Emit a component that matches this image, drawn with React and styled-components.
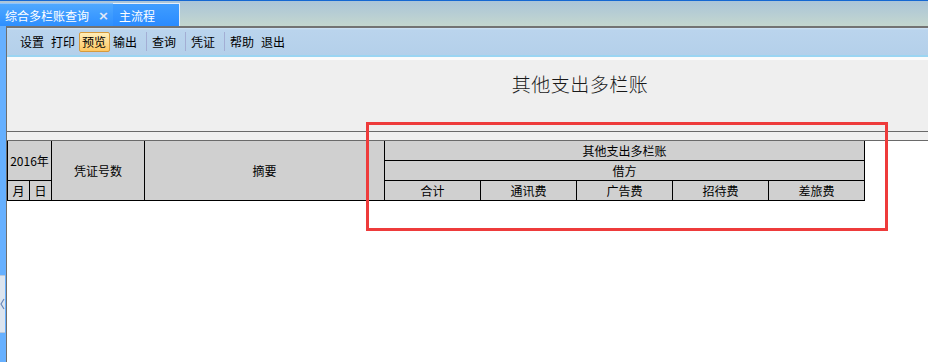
import React from 'react';
import styled, { createGlobalStyle, css } from 'styled-components';

const GlobalStyle = createGlobalStyle`
  html, body {
    margin: 0;
    padding: 0;
    background: #fff;
  }
  body {
    font-family: "Noto Sans CJK SC", "Noto Sans", sans-serif;
    font-size: 12px;
    color: #000;
  }
`;

const Page = styled.div`
  position: relative;
  width: 928px;
  height: 362px;
  display: flex;
  flex-direction: column;
  overflow: hidden;
`;

const TabBar = styled.div`
  height: 26px;
  box-sizing: border-box;
  border-top: 1px solid #1467d2;
  background: linear-gradient(#aac4d8, #c4d7cf);
  display: flex;
  align-items: flex-end;
  flex-shrink: 0;
`;

const Tab = styled.div`
  width: ${p => p.$w}px;
  height: 23px;
  box-sizing: border-box;
  display: flex;
  align-items: center;
  padding-left: ${p => p.$pl}px;
  color: #fff;
  font-size: 12px;
  white-space: nowrap;
  ${p => p.$active
    ? css`
      background: linear-gradient(#4ea8ff, #2e8fff);
      border-top: 1px solid #8cc4ff;
    `
    : css`
      background: linear-gradient(#3f9dff, #2b8bff);
      border-top: 1px solid #e4eefa;
      border-right: 1px solid #e4eefa;
    `}
`;

const Close = styled.span`
  margin-left: 9px;
  font-family: "DejaVu Sans", sans-serif;
  font-size: 13px;
  font-weight: bold;
  color: #e2e8f6;
  line-height: 1;
`;

const Body = styled.div`
  flex: 1;
  display: flex;
  min-height: 0;
`;

const LeftStrip = styled.div`
  width: 6px;
  flex-shrink: 0;
  background: #66b0ff;
  border-right: 1px solid #6e6e6e;
  display: flex;
  flex-direction: column;
`;

const Handle = styled.div`
  margin-top: 249px;
  width: 5px;
  height: 58px;
  box-sizing: border-box;
  background: #dde5ef;
  border-top: 1px solid #b9c8dc;
  border-bottom: 1px solid #b9c8dc;
  display: flex;
  align-items: center;
`;

const Main = styled.div`
  flex: 1;
  display: flex;
  flex-direction: column;
  min-width: 0;
`;

const Toolbar = styled.div`
  height: 27px;
  border-top: 2px solid #737373;
  border-bottom: 2px solid #9bd5f2;
  background: linear-gradient(#d0e3f5 0, #bad4ed 2px, #b4d0ea 100%);
  display: flex;
  align-items: center;
  padding-left: 9.5px;
`;

const ToolBtn = styled.div`
  height: 20px;
  line-height: 18px;
  box-sizing: border-box;
  padding: 0 2.5px;
  border: 1px solid transparent;
  font-size: 12px;
  white-space: nowrap;
  ${p => p.$active && css`
    background: linear-gradient(#ffedb8, #ffc862);
    border-color: #d69a3c;
    border-radius: 2px;
  `}
`;

const Sep = styled.div`
  width: 1px;
  height: 19px;
  background: #a3aed4;
  margin: 0 2px 0 5px;
`;

const ReportHeader = styled.div`
  height: 71px;
  border-top: 3px solid #fbfbfb;
  border-bottom: 1px solid #6a6a6a;
  background: #efefef;
  padding-left: 225px;
  text-align: center;
`;

const Title = styled.div`
  padding-top: 12px;
  font-size: 19px;
  font-weight: 300;
  line-height: 24px;
  letter-spacing: 0.5px;
  color: #1a1a1a;
`;

const Divider = styled.div`
  height: 8px;
  background: #f0f0f0;
  border-bottom: 1px solid #6a6a6a;
`;

const TableArea = styled.div`
  flex: 1;
  background: #fff;
`;

const HeaderGrid = styled.div`
  display: grid;
  width: max-content;
  background: #000;
  gap: 1px;
  padding: 0 1px 1px 1px;
  grid-template-columns: 21px 21px 92px 239px repeat(5, 95px);
  grid-template-rows: repeat(3, 19px);
`;

const Cell = styled.div`
  grid-column: ${p => p.$col};
  grid-row: ${p => p.$row};
  background: #d0d0d0;
  display: flex;
  align-items: center;
  justify-content: center;
  font-size: 12px;
  line-height: 1;
  white-space: nowrap;
`;

const Highlight = styled.div`
  position: absolute;
  left: 366px;
  top: 122px;
  width: 522px;
  height: 109px;
  box-sizing: border-box;
  border: 3px solid #ee3b3b;
  pointer-events: none;
`;

const tools = [
  ['设置', '打印', '预览', '输出'],
  ['查询'],
  ['凭证'],
  ['帮助', '退出'],
];

const subCols = ['合计', '通讯费', '广告费', '招待费', '差旅费'];

export default function App() {
  return (
    <Page>
      <GlobalStyle />
      <TabBar>
        <Tab $active $w={113} $pl={5}>
          综合多栏账查询<Close>×</Close>
        </Tab>
        <Tab $w={67} $pl={6}>主流程</Tab>
      </TabBar>
      <Body>
        <LeftStrip>
          <Handle>
            <svg width="5" height="12" viewBox="0 0 5 12">
              <polyline points="4,1 1,6 4,11" fill="none" stroke="#6a88b8" strokeWidth="1.2" />
            </svg>
          </Handle>
        </LeftStrip>
        <Main>
          <Toolbar>
            {tools.map((group, gi) => (
              <React.Fragment key={gi}>
                {gi > 0 && <Sep />}
                {group.map(t => (
                  <ToolBtn key={t} $active={t === '预览'}>{t}</ToolBtn>
                ))}
              </React.Fragment>
            ))}
          </Toolbar>
          <ReportHeader>
            <Title>其他支出多栏账</Title>
          </ReportHeader>
          <Divider />
          <TableArea>
            <HeaderGrid>
              <Cell $col="1 / 3" $row="1 / 3">2016年</Cell>
              <Cell $col="3" $row="1 / 4">凭证号数</Cell>
              <Cell $col="4" $row="1 / 4">摘要</Cell>
              <Cell $col="5 / 10" $row="1">其他支出多栏账</Cell>
              <Cell $col="5 / 10" $row="2">借方</Cell>
              <Cell $col="1" $row="3">月</Cell>
              <Cell $col="2" $row="3">日</Cell>
              {subCols.map((c, i) => (
                <Cell key={c} $col={`${5 + i}`} $row="3">{c}</Cell>
              ))}
            </HeaderGrid>
          </TableArea>
        </Main>
      </Body>
      <Highlight />
    </Page>
  );
}
